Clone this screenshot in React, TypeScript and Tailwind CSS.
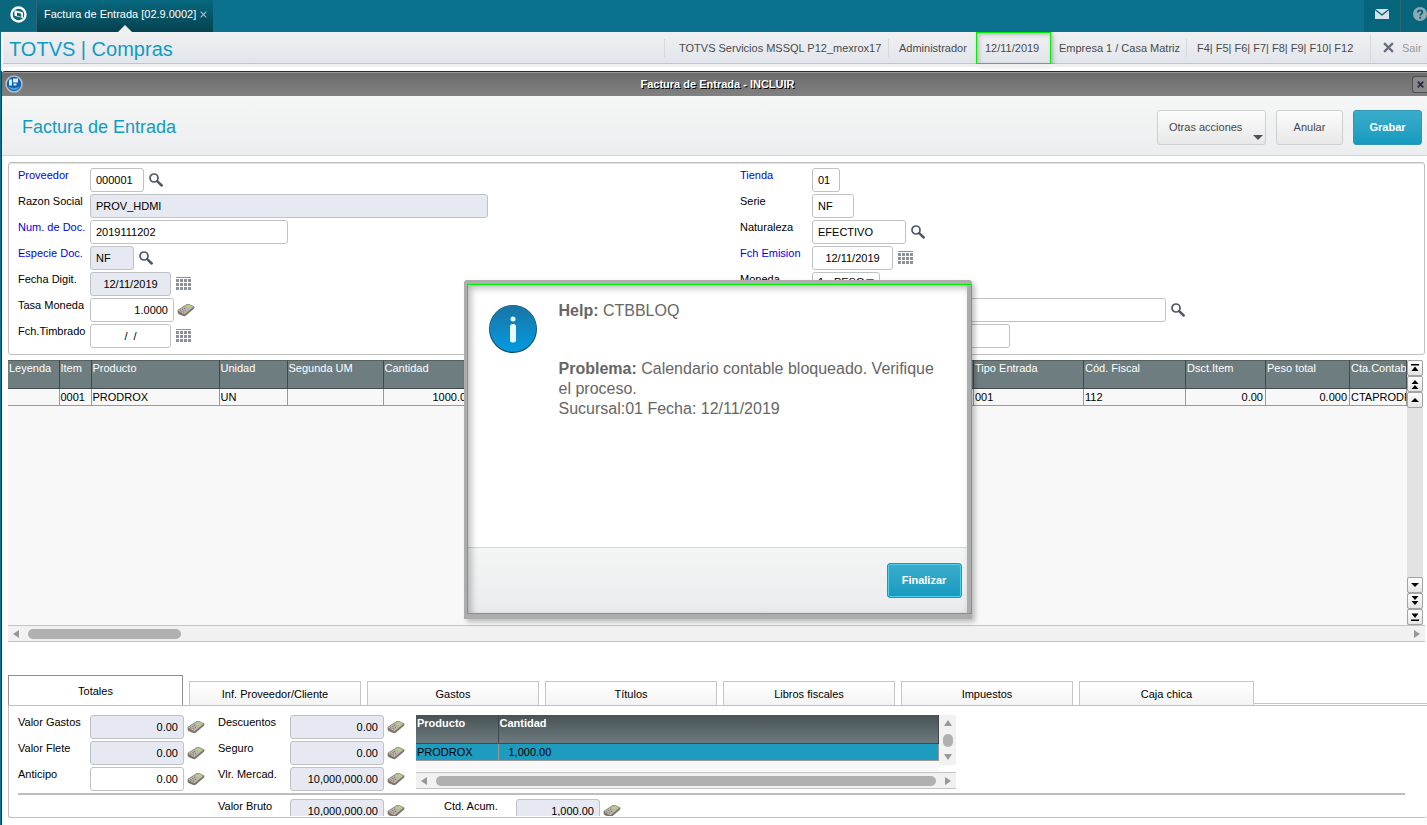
import React from 'react';

const FONT = 'font-["Liberation_Sans",Arial,sans-serif]';

/* ---------- Icons ---------- */

function SearchIcon() {
  return (
    <svg width="14" height="14" viewBox="0 0 14 14" fill="none" stroke="#4d5766">
      <circle cx="5" cy="5" r="4" strokeWidth="1.7" />
      <path d="M8.200 8.200l4.500 4.300" strokeWidth="2.5" strokeLinecap="round" />
    </svg>
  );
}

function CalendarIcon() {
  return (
    <svg width="15" height="14" viewBox="0 0 15 14" fill="#8b919c">
      <rect width="15" height="1" />
      {[2, 6, 10].map((y) => [0, 4, 8, 12].map((x) => <rect key={`${x}-${y}`} x={x} y={y} width="3" height="3" />))}
    </svg>
  );
}

function CalculatorIcon() {
  return (
    <svg width="18" height="14" viewBox="0 0 18 14">
      <path d="M0.500 8c0-.8.500-1.300 1.200-1.700L9.500 1.300c.8-.5 1.600-.5 2.400-.2l5 2.200c.8.400.8 1.700 0 2.400L9 12.600c-.8.700-1.800.8-2.800.5l-4.700-2C.8 10.700.500 9 .500 8z" fill="#7d756c" />
      <path d="M1 7.500L9.800 1.700c.6-.4 1.300-.4 2-.1l4.800 2.200L8.500 10.400c-.7.600-1.500.6-2.300.3z" fill="#bdb5ab" />
      <path d="M8.800 3.400l2.500-1.500 3.900 1.700-2.500 1.900z" fill="#a9d873" />
      <path d="M3.200 7.600l1.300.6M5.800 8.700l1.300.6M5.200 6.300l1.300.6M7.800 7.400l1.300.6M7 5.100l1.300.6" stroke="#77706a" strokeWidth="1" />
    </svg>
  );
}

function LogoIcon() {
  return (
    <svg width="17" height="17" viewBox="0 0 17 17">
      <circle cx="8.500" cy="8.500" r="7" fill="none" stroke="#fff" strokeWidth="2.4" />
      <path d="M4.500 4.200l5.500 1.300 3 1v5.500l-5-1.300-3.500-1z" fill="#fff" />
      <path d="M7 6.500l4.200 1.200v3.200L7 9.700z" fill="#0a6478" />
    </svg>
  );
}

function GlobeIcon() {
  return (
    <svg width="18" height="18" viewBox="0 0 18 18">
      <circle cx="9" cy="9" r="8" fill="#1260a8" stroke="#b5bcc4" strokeWidth="1.6" />
      <path d="M3 11a6.500 6.500 0 0 0 12 0c-3 2.500-9 2.500-12 0z" fill="#3fa4ec" />
      <path d="M4 4.500h3v6H4zM8 3.500h5v4H8zM8.500 8.500h3v2h-3z" fill="#d5ecff" />
    </svg>
  );
}

function MailIcon() {
  return (
    <svg width="14" height="10" viewBox="0 0 14 10">
      <rect width="14" height="10" fill="#d3e3e8" />
      <path d="M0 0.500l7 5.500 7-5.500" fill="none" stroke="#07596c" strokeWidth="1.3" />
    </svg>
  );
}

function HelpIcon() {
  return (
    <svg width="14" height="14" viewBox="0 0 14 14">
      <circle cx="7" cy="7" r="7" fill="#8fa9b2" />
      <path d="M4.800 5.500c0-3 4.600-2.800 4.600-.2 0 1.600-2.200 1.600-2.200 3.300" fill="none" stroke="#07596c" strokeWidth="1.700" />
      <rect x="6.300" y="9.800" width="1.800" height="1.800" fill="#07596c" />
    </svg>
  );
}

function CloseIcon({ size, color, stroke }: { size: number; color: string; stroke: number }) {
  return (
    <svg width={size} height={size} viewBox="0 0 10 10">
      <path d="M1 1l8 8M9 1l-8 8" stroke={color} strokeWidth={stroke} />
    </svg>
  );
}

function InfoIcon() {
  return (
    <svg width="48" height="48" viewBox="0 0 48 48" className="shrink-0">
      <defs>
        <linearGradient id="info" x1="0" y1="0" x2="0" y2="1">
          <stop offset="0" stopColor="#1a74a3" />
          <stop offset="1" stopColor="#039be0" />
        </linearGradient>
      </defs>
      <circle cx="24" cy="24" r="24" fill="#0c4a6b" />
      <circle cx="24" cy="23.500" r="23.200" fill="url(#info)" />
      <circle cx="24" cy="14" r="2.500" fill="#e6fbff" />
      <rect x="21" y="19" width="6" height="18.500" rx="2.500" fill="#e6fbff" />
    </svg>
  );
}

/* ---------- Form pieces ---------- */

type FieldProps = {
  id: string;
  label: string;
  value: string;
  width: string;
  required?: boolean;
  readOnly?: boolean;
  align?: string;
  icon?: React.ReactNode;
  hideLabel?: boolean;
};

function Field({ id, label, value, width, required, readOnly, align = 'text-left', icon, hideLabel }: FieldProps) {
  return (
    <div className="flex h-[26px] shrink-0 items-start">
      <label htmlFor={id} className={`w-[72px] shrink-0 whitespace-nowrap leading-[14px] ${required ? 'text-[#0000ee]' : 'text-black'}`}>
        {hideLabel ? '' : label}
      </label>
      <input
        id={id}
        aria-label={label}
        defaultValue={value}
        readOnly={readOnly}
        className={`h-6 shrink-0 rounded-[3px] border border-[#bfc2c4] px-[5px] outline-none ${width} ${align} ${readOnly ? 'bg-[#e6e9f1]' : 'bg-white'}`}
      />
      {icon && (
        <button type="button" aria-label={label} className="ml-[3px] flex h-6 w-[18px] shrink-0 items-center justify-center">
          {icon}
        </button>
      )}
    </div>
  );
}

function HeaderForm() {
  return (
    <form className="ml-1.5 mr-0.5 mt-1.5 flex shrink-0 rounded-[3px] border border-[#bfbfbf] bg-white pb-1 pl-[9px] pt-[5px] shadow-[inset_0_1px_0_#e3e3e3]">
      <div className="w-[722px] shrink-0">
        <Field id="proveedor" label="Proveedor" value="000001" width="w-[54px]" required icon={<SearchIcon />} />
        <Field id="razon" label="Razon Social" value="PROV_HDMI" width="w-[398px]" readOnly />
        <Field id="numero" label="Num. de Doc." value="2019111202" width="w-[198px]" required />
        <Field id="especie" label="Especie Doc." value="NF" width="w-11" required readOnly icon={<SearchIcon />} />
        <Field id="digit" label="Fecha Digit." value="12/11/2019" width="w-[81px]" readOnly align="text-center" icon={<CalendarIcon />} />
        <Field id="tasa" label="Tasa Moneda" value="1.0000" width="w-[84px]" align="text-right" icon={<CalculatorIcon />} />
        <Field id="timbrado" label="Fch.Timbrado" value="/  /" width="w-[81px]" align="text-center" icon={<CalendarIcon />} />
      </div>
      <div>
        <Field id="tienda" label="Tienda" value="01" width="w-7" required />
        <Field id="serie" label="Serie" value="NF" width="w-[42px]" />
        <Field id="naturaleza" label="Naturaleza" value="EFECTIVO" width="w-[94px]" icon={<SearchIcon />} />
        <Field id="emision" label="Fch Emision" value="12/11/2019" width="w-[81px]" required align="text-center" icon={<CalendarIcon />} />
        <div className="flex h-[26px] items-start">
          <label htmlFor="moneda" className="w-[72px] leading-[14px]">Moneda</label>
          <div className="relative">
            <select id="moneda" className="h-6 w-[68px] appearance-none rounded-[3px] border border-[#bfc2c4] bg-white pb-1 pl-[5px]">
              <option>1 - PESO</option>
            </select>
            <svg width="8" height="5" viewBox="0 0 8 5" className="pointer-events-none absolute right-1.5 top-[7px]">
              <path d="M0 0h8L4 5z" fill="#5b6272" />
            </svg>
          </div>
        </div>
        <Field id="descripcion" label="Descripcion" value="" width="w-[354px]" hideLabel icon={<SearchIcon />} />
        <Field id="codigo" label="Codigo" value="" width="w-[198px]" hideLabel />
      </div>
    </form>
  );
}

/* ---------- Items grid ---------- */

const columns = [
  { title: 'Leyenda', width: 'w-[51px]', value: '' },
  { title: 'Item', width: 'w-8', value: '0001' },
  { title: 'Producto', width: 'w-32', value: 'PRODROX' },
  { title: 'Unidad', width: 'w-[68px]', value: 'UN' },
  { title: 'Segunda UM', width: 'w-24', value: '' },
  { title: 'Cantidad', width: 'w-[104px]', value: '1000.0000', right: true },
  { title: '', width: '', value: '' },
  { title: 'Tipo Entrada', width: 'w-[110px]', value: '001' },
  { title: 'Cód. Fiscal', width: 'w-[102px]', value: '112' },
  { title: 'Dsct.Item', width: 'w-20', value: '0.00', right: true },
  { title: 'Peso total', width: 'w-[84px]', value: '0.000', right: true },
  { title: 'Cta.Contable', width: 'w-[57px]', value: 'CTAPRODROX' },
];

const scrollGlyphs: Record<string, string> = {
  first: 'M1 1h8v1.500h-8zM1.500 8h7L5 3.500z',
  pageUp: 'M1.500 5h7L5 1zM1.500 10h7L5 6z',
  up: 'M1 7h8L5 3z',
  down: 'M1 3h8L5 7z',
  pageDown: 'M1.500 0h7L5 4zM1.500 5h7L5 9z',
  last: 'M1.500 1.500h7L5 6zM1 7.500h8V9h-8z',
};

function ScrollButton({ name }: { name: string }) {
  return (
    <button type="button" aria-label={name} className="flex h-4 w-4 items-center justify-center rounded-[2px] border border-[#a3a3a3] bg-linear-to-b from-white to-[#e4e4e4]">
      <svg width="10" height="10" viewBox="0 0 10 10">
        <path d={scrollGlyphs[name]} fill="#000" />
      </svg>
    </button>
  );
}

function Arrow({ d }: { d: string }) {
  return (
    <svg width="8" height="8" viewBox="0 0 8 8" className="shrink-0">
      <path d={d} fill="#979797" />
    </svg>
  );
}

function ItemsGrid() {
  return (
    <section className="ml-1.5 mr-0.5 mt-[5px] flex min-h-0 flex-1 flex-col">
      <div className="flex min-h-0 flex-1">
        <div className="min-w-0 flex-1 bg-[#f8f8f8]">
          <table className="w-full table-fixed border-collapse">
            <thead>
              <tr className="h-7 bg-[#6e7d80] text-left align-top text-white">
                {columns.map((c, i) => (
                  <th key={i} className={`overflow-hidden whitespace-nowrap border-r border-t border-b border-r-[#3f494b] border-t-[#55605f] border-b-[#434b4c] px-px font-normal leading-[14px] ${c.width}`}>
                    {c.title}
                  </th>
                ))}
              </tr>
            </thead>
            <tbody>
              <tr className="h-[17px]">
                {columns.map((c, i) => (
                  <td key={i} className={`overflow-hidden whitespace-nowrap border-b border-r border-[#999] leading-4 ${c.right ? 'pr-0.5 text-right' : 'pl-px'}`}>
                    {c.value}
                  </td>
                ))}
              </tr>
            </tbody>
          </table>
        </div>
        <div className="flex w-4 flex-col justify-between bg-[#e3e3e3]">
          <div>
            <ScrollButton name="first" />
            <ScrollButton name="pageUp" />
            <ScrollButton name="up" />
          </div>
          <div>
            <ScrollButton name="down" />
            <ScrollButton name="pageDown" />
            <ScrollButton name="last" />
          </div>
        </div>
        <div className="w-0.5" />
      </div>
      <div className="flex h-[17px] shrink-0 items-center justify-between border-y border-[#c4c4c4] bg-[#f1f1f1] px-1">
        <div className="flex items-center gap-2">
          <Arrow d="M7 0v8L1 4z" />
          <div className="h-2.5 w-[153px] rounded-[5px] bg-[#b0b0b0]" />
        </div>
        <Arrow d="M1 0v8l6-4z" />
      </div>
    </section>
  );
}

/* ---------- Bottom folder ---------- */

const tabs = ['Inf. Proveedor/Cliente', 'Gastos', 'Títulos', 'Libros fiscales', 'Impuestos', 'Caja chica'];

function TotalsPanel() {
  const calc = <CalculatorIcon />;
  return (
    <section className="mt-[33px] shrink-0 pb-[7px] pl-1.5">
      <div className="flex items-end gap-1.5">
        <button type="button" className="h-[30px] w-[175px] border border-b-0 border-[#8f8f8f] bg-white pt-px">Totales</button>
        {tabs.map((t) => (
          <button key={t} type="button" className="h-6 w-[172px] border border-b-0 border-[#c6c6c6] bg-linear-to-b from-white to-[#f4f4f4] pt-0.5 last-of-type:w-[175px]">
            {t}
          </button>
        ))}
        <div className="-ml-1.5 mb-px h-px flex-1 bg-[#c6c6c6]" />
      </div>
      <div className="h-[113px] overflow-hidden rounded-b-[3px] border border-r-0 border-[#c0c0c0] pb-px pl-[9px] pt-[9px]">
        <div className="flex h-[78px]">
          <div className="w-[200px]">
            <Field id="gastos" label="Valor Gastos" value="0.00" width="w-[94px]" readOnly align="text-right" icon={calc} />
            <Field id="flete" label="Valor Flete" value="0.00" width="w-[94px]" readOnly align="text-right" icon={calc} />
            <Field id="anticipo" label="Anticipo" value="0.00" width="w-[94px]" align="text-right" icon={calc} />
          </div>
          <div className="w-[198px]">
            <Field id="descuentos" label="Descuentos" value="0.00" width="w-[94px]" readOnly align="text-right" icon={calc} />
            <Field id="seguro" label="Seguro" value="0.00" width="w-[94px]" readOnly align="text-right" icon={calc} />
            <Field id="mercad" label="Vlr. Mercad." value="10,000,000.00" width="w-[94px]" readOnly align="text-right" icon={calc} />
          </div>
          <div className="w-[540px]">
            <div className="flex h-[57px]">
              <div className="flex-1 bg-[#f8f8f8]">
                <table className="w-full table-fixed border-collapse">
                  <thead>
                    <tr className="h-7 bg-linear-to-b from-[#475254] to-[#6d7b7f] text-left align-top text-white">
                      <th className="w-[82px] border-b border-r border-[#3f494b] px-px pt-px font-bold leading-[14px]">Producto</th>
                      <th className="border-b border-r border-[#3f494b] px-px pt-px font-bold leading-[14px]">Cantidad</th>
                    </tr>
                  </thead>
                  <tbody>
                    <tr className="h-[17px] bg-[#1d9cbf]">
                      <td className="border-b border-r border-[#999] px-px leading-4">PRODROX</td>
                      <td className="border-b border-r border-[#999] px-2.5 leading-4">1,000.00</td>
                    </tr>
                  </tbody>
                </table>
              </div>
              <div className="flex h-[50px] w-[17px] flex-col items-center justify-between bg-[#f1f1f1] py-1">
                <Arrow d="M0 7h8L4 1z" />
                <div className="h-[13px] w-2.5 rounded-[5px] bg-[#b0b0b0]" />
                <Arrow d="M0 1h8L4 7z" />
              </div>
            </div>
            <div className="flex h-[17px] items-center gap-2 border-y border-[#c4c4c4] bg-[#f1f1f1] px-1">
              <Arrow d="M7 0v8L1 4z" />
              <div className="h-2.5 flex-1 rounded-[5px] bg-[#b0b0b0]" />
              <Arrow d="M1 0v8l6-4z" />
            </div>
          </div>
        </div>
        <div className="mr-[22px] h-0.5 bg-[#bdbdbd]" />
        <div className="mt-1 flex h-[17px] overflow-hidden pl-[200px]">
          <div className="w-[226px]">
            <Field id="bruto" label="Valor Bruto" value="10,000,000.00" width="w-[94px]" readOnly align="text-right" icon={calc} />
          </div>
          <Field id="acum" label="Ctd. Acum." value="1,000.00" width="w-[84px]" readOnly align="text-right" icon={calc} />
        </div>
      </div>
    </section>
  );
}

/* ---------- Dialog ---------- */

function HelpDialog() {
  return (
    <div className="absolute inset-0 flex items-center justify-center pl-1.5 pt-0.5">
      <div role="dialog" aria-label="Help" className="w-[508px] rounded-t-[3px] bg-[#adadad] pb-[5px] pl-[3px] pt-1 shadow-[3px_3px_5px_rgba(0,0,0,0.25)]">
        <div className="border border-[#00f000] bg-[#adadad] pr-1">
          <div className="relative bg-white">
            <div className="flex h-[262px] gap-[22px] pl-[21px] pr-5 pt-4">
              <div className="pt-1">
                <InfoIcon />
              </div>
              <div className="text-[16px] leading-5 text-[#666]">
                <p><b>Help:</b> CTBBLOQ</p>
                <p className="mt-[38px]"><b>Problema:</b> Calendario contable bloqueado. Verifique el proceso.</p>
                <p>Sucursal:01 Fecha: 12/11/2019</p>
              </div>
            </div>
            <div className="flex h-[66px] items-center justify-end border-t border-[#d3d6d6] bg-linear-to-b from-[#f4f6f5] to-[#eaebee] pr-[5px]">
              <button type="button" className="relative z-10 h-[35px] w-[75px] rounded-[3px] border border-[#2592b0] bg-linear-to-b from-[#3baccb] to-[#129bbf] font-bold text-white shadow-[inset_0_0_0_1px_#4fd0f2]">
                Finalizar
              </button>
            </div>
            <div className="pointer-events-none absolute inset-0 shadow-[inset_3px_3px_7px_rgba(0,0,0,0.28)]" />
          </div>
        </div>
      </div>
    </div>
  );
}

/* ---------- Page ---------- */

function App() {
  return (
    <div className={`flex h-screen min-h-[760px] flex-col overflow-hidden bg-white text-[11px] text-black ${FONT}`}>
      {/* Top bar */}
      <header className="flex h-8 shrink-0 justify-between bg-[#0b718e]">
        <div className="flex">
          <div className="flex w-[37px] items-center justify-center border-b border-r border-[#2f6470] bg-[#0a677d] pb-0.5">
            <LogoIcon />
          </div>
          <div className="relative flex w-[176px] items-center gap-1 whitespace-nowrap bg-linear-to-b from-[#07697f] to-[#05424f] pb-1 pl-[7px] text-white">
            <span>Factura de Entrada [02.9.0002]</span>
            <button type="button" aria-label="Cerrar"><CloseIcon size={7} color="#a9c4cb" stroke={1.5} /></button>
            <svg width="14" height="7" viewBox="0 0 14 7" className="absolute bottom-0 left-[81px]">
              <path d="M0 7l7-7 7 7z" fill="#efeff1" />
            </svg>
          </div>
        </div>
        <div className="flex">
          <button type="button" aria-label="Mensajes" className="flex w-9 items-center justify-center bg-[#07657b] pb-1"><MailIcon /></button>
          <button type="button" aria-label="Ayuda" className="flex w-[27px] items-center border-l border-[#2f6470] bg-[#07657b] pb-1 pl-3"><HelpIcon /></button>
        </div>
      </header>

      <div className="flex min-h-0 flex-1 flex-col border-l border-[#0b718e]">
        {/* Module bar */}
        <div className="ml-0.5 flex h-8 shrink-0 items-center justify-between border-b border-[#c0c4cb] bg-linear-to-b from-[#f0f0f2] to-[#e1e6ec] text-[#4a4a4a]">
          <h1 className="pl-1.5 pt-0.5 text-[20px] text-[#0f9cc3]">TOTVS | Compras</h1>
          <div className="flex items-center whitespace-nowrap leading-[18px]">
            <span className="w-[224px] border-l border-[#d6d9dc] pl-[14px]">TOTVS Servicios MSSQL P12_mexrox17</span>
            <span className="w-[88px] border-l border-[#d6d9dc] pl-2.5">Administrador</span>
            <span className="flex h-8 w-[75px] items-center border border-[#00f000] pl-2 shadow-[2px_2px_4px_rgba(0,0,0,0.25),inset_2px_2px_4px_rgba(0,0,0,0.2)]">12/11/2019</span>
            <span className="w-[135px] pl-2">Empresa 1 / Casa Matriz</span>
            <span className="w-[184px] border-l border-[#d6d9dc] pl-2.5">F4| F5| F6| F7| F8| F9| F10| F12</span>
            <button type="button" className="flex h-7 w-[57px] items-center gap-2 border-l border-[#d6d9dc] pl-3 text-[#999]">
              <CloseIcon size={11} color="#666e7b" stroke={2} />
              Sair
            </button>
          </div>
        </div>
        <div className="mb-1 h-[3px] shrink-0 bg-[#f0f0f2]" />

        {/* Window */}
        <main className="relative flex min-h-0 flex-1 flex-col border-l border-[#1d3a5c]">
          <div className="flex h-[25px] shrink-0 items-center justify-between rounded-tl-[3px] border-t border-[#2c2c2c] bg-linear-to-b from-[#6b6b6b] to-[#818181] pl-[3px] shadow-[inset_0_1px_0_#999]">
            <GlobeIcon />
            <h2 className="font-bold text-white [text-shadow:1px_1px_0_#000]">Factura de Entrada - INCLUIR</h2>
            <button type="button" aria-label="Cerrar ventana" className="flex h-[17px] w-[15px] items-center justify-center rounded-l-[3px] border border-r-0 border-[#4f4f4f] bg-[#8a8a8a]">
              <CloseIcon size={7} color="#262c47" stroke={2.5} />
            </button>
          </div>

          <div className="flex h-[60px] shrink-0 items-center justify-between border-b border-[#d3d3d3] bg-linear-to-b from-[#f5f7f6] to-[#ecedef] pl-5 pr-[5px]">
            <h3 className="pt-1 text-[18px] text-[#0f9cc3]">Factura de Entrada</h3>
            <div className="flex gap-2.5 pb-px pt-1 text-[#484848]">
              <button type="button" className="relative h-[35px] w-[109px] rounded-[3px] border border-[#cfcfcf] bg-linear-to-b from-[#fcfcfc] to-[#e8e8e8] pl-[11px] text-left">
                Otras acciones
                <svg width="10" height="5" viewBox="0 0 10 5" className="absolute bottom-1 right-0.5">
                  <path d="M0 0h10L5 5z" fill="#4d515a" />
                </svg>
              </button>
              <button type="button" className="h-[35px] w-[67px] rounded-[3px] border border-[#cfcfcf] bg-linear-to-b from-[#fcfcfc] to-[#e8e8e8]">Anular</button>
              <button type="button" className="h-[35px] w-[69px] rounded-[3px] border border-[#3297b3] bg-linear-to-b from-[#3baccb] to-[#129bbf] font-bold text-white">Grabar</button>
            </div>
          </div>

          <HeaderForm />
          <ItemsGrid />
          <TotalsPanel />
          <HelpDialog />
        </main>
      </div>
    </div>
  );
}

export default App;
